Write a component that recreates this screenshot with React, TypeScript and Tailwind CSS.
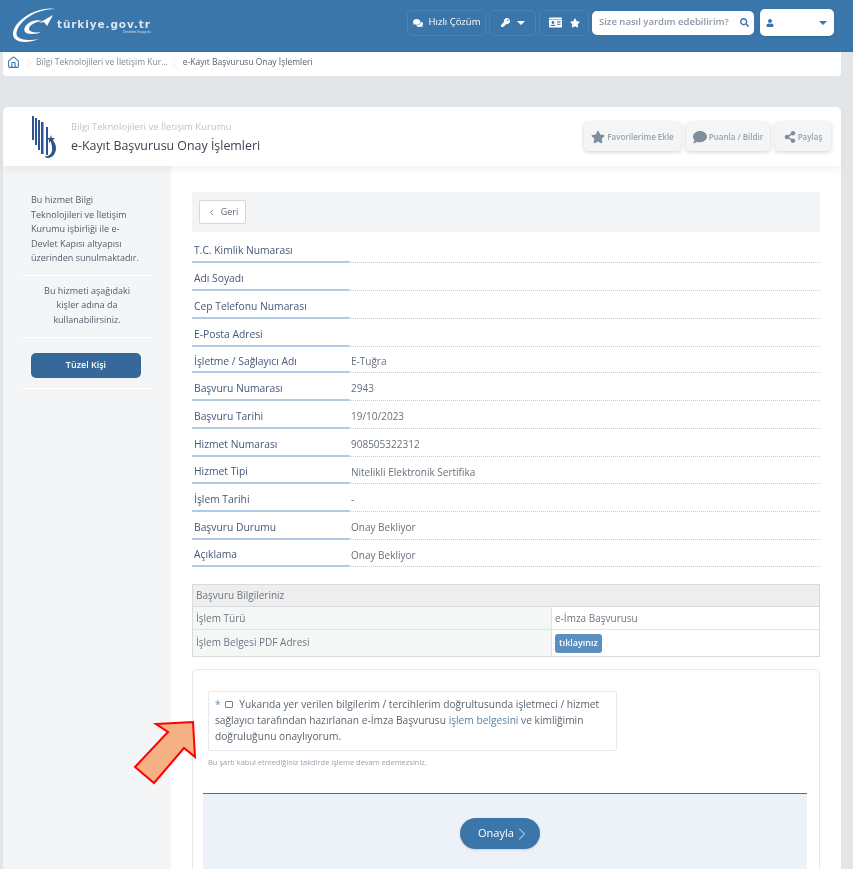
import React from 'react';
import { Home, ChevronLeft, ChevronRight } from 'lucide-react';
import { FaStar, FaComment, FaComments, FaShareAlt, FaKey, FaUser, FaSearch, FaIdCard } from 'react-icons/fa';

const font = { fontFamily: '"Open Sans", "Noto Sans", sans-serif' };

const rows: { label: string; value?: string; h: string }[] = [
  { label: 'T.C. Kimlik Numarası', h: 'h-[28px]' },
  { label: 'Adı Soyadı', h: 'h-[28px]' },
  { label: 'Cep Telefonu Numarası', h: 'h-[28px]' },
  { label: 'E-Posta Adresi', h: 'h-[28px]' },
  { label: 'İşletme / Sağlayıcı Adı', value: 'E-Tuğra', h: 'h-[26px]' },
  { label: 'Başvuru Numarası', value: '2943', h: 'h-[28px]' },
  { label: 'Başvuru Tarihi', value: '19/10/2023', h: 'h-[28px]' },
  { label: 'Hizmet Numarası', value: '908505322312', h: 'h-[28px]' },
  { label: 'Hizmet Tipi', value: 'Nitelikli Elektronik Sertifika', h: 'h-[27px]' },
  { label: 'İşlem Tarihi', value: '-', h: 'h-[28px]' },
  { label: 'Başvuru Durumu', value: 'Onay Bekliyor', h: 'h-[28px]' },
  { label: 'Açıklama', value: 'Onay Bekliyor', h: 'h-[27px]' },
];

const Logo = () => (
  <svg width="44" height="36" viewBox="0 0 44 36" className="shrink-0">
    <path d="M43 1C36 -1 20 2 9 12C1 19 -1 27 3 31C7 35 17 35 27 31C18 33 8 32 5 28C3 24 7 16 15 10C23 4 34 1 43 1Z" fill="#fff" />
    <path d="M30 13C24 11 16 14 13 19C11 23 13 26 20 26C24 26 27 25 29 24C23 25 17 24 17 21C17 17 23 14 30 13Z" fill="#fff" />
    <path d="M27 15L41 7L35 18L32 14Z" fill="#fff" />
  </svg>
);

const AgencyLogo = () => (
  <svg width="26" height="44" viewBox="0 0 26 44" className="shrink-0">
    <g fill="#2d5490">
      <rect x="1" y="1" width="2" height="24" />
      <rect x="4" y="3" width="2" height="27" />
      <rect x="7" y="5" width="2" height="30" />
      <rect x="10" y="7" width="2.5" height="32" />
      <rect x="15" y="12" width="2" height="28" />
      <path d="M19 24C22 25 25 28 25 33C25 39 21 43 17 43C15 43 14 42 14 41C18 42 22 38 21 33C21 30 20 27 19 24Z" />
      <path d="M20 20L21 23L24 23L22 25L23 28L20 26L18 28L18 25L16 23L19 23Z" />
    </g>
  </svg>
);

const HeaderBtn = ({ children }: { children: React.ReactNode }) => (
  <div className="h-[26px] flex items-center justify-center rounded-[5px] border border-[#4a82b4] text-white">{children}</div>
);

const Caret = ({ color = 'border-t-white' }: { color?: string }) => (
  <span className={`w-0 h-0 border-x-[4px] border-x-transparent border-t-[4px] ${color}`} />
);

const ActionBtn = ({ icon, label, w }: { icon: React.ReactNode; label: string; w: string }) => (
  <div className={`${w} h-[29px] flex items-center justify-center gap-[2px] rounded-[4px] bg-[#f4f5f6] shadow-[0_1px_4px_rgba(0,0,0,0.18)] text-[8px] font-semibold text-[#98a3ae]`}>
    {icon}
    <span>{label}</span>
  </div>
);

export default function App() {
  return (
    <div style={font} className="relative h-[869px] w-[853px] overflow-hidden bg-[#e3e6e9] text-[#4b5563] blur-[0.4px]">
      {/* Header */}
      <header className="h-[52px] bg-[#3b76ab] flex items-center pl-[12px] pr-[19px] border-b border-[#3a6f9f]">
        <Logo />
        <div className="ml-[1px] flex flex-col items-end">
          <span className="font-['DejaVu_Sans'] font-bold text-[10.5px] leading-[12px] tracking-[0.9px] text-[#d9e5f0]">türkiye.gov.tr</span>
          <span className="text-[3.5px] leading-[4px] text-[#d9e5f0]">Devletin Kısayolu</span>
        </div>
        <div className="ml-auto flex items-center gap-[3px] pb-[6px]">
          <div className="w-[79px]">
            <HeaderBtn>
              <FaComments size={10} className="mr-[6px]" />
              <span className="text-[9.5px] font-medium">Hızlı Çözüm</span>
            </HeaderBtn>
          </div>
          <div className="w-[47px]">
            <HeaderBtn>
              <FaKey size={9} className="mr-[7px]" />
              <Caret />
            </HeaderBtn>
          </div>
          <div className="w-[50px]">
            <HeaderBtn>
              <FaIdCard size={13} className="mr-[8px]" />
              <FaStar size={10} />
            </HeaderBtn>
          </div>
          <div className="w-[162px] h-[24px] bg-white rounded-[5px] flex items-center justify-between pl-[7px] pr-[5px]">
            <span className="text-[9.5px] text-[#8c97a3] font-semibold">Size nasıl yardım edebilirim?</span>
            <FaSearch size={9} className="text-[#3b76ab]" />
          </div>
          <div className="ml-[3px] w-[74px] h-[27px] bg-white rounded-[5px] flex items-center justify-between pl-[6px] pr-[7px] shadow-sm">
            <FaUser size={8} className="text-[#3b76ab]" />
            <Caret color="border-t-[#3b76ab]" />
          </div>
        </div>
      </header>

      {/* Breadcrumb */}
      <nav className="ml-[3px] w-[838px] h-[24px] bg-white rounded-b-[4px] flex items-center pl-[4px] pb-[3px] text-[8.5px] text-[#7e8a96] font-medium">
        <Home size={13} className="text-[#3b76ab]" />
        <ChevronRight size={14} strokeWidth={0.7} className="ml-[2px] text-[#c8ced4]" />
        <span>Bilgi Teknolojileri ve İletişim Kur...</span>
        <ChevronRight size={14} strokeWidth={0.7} className="mr-[1px] text-[#c8ced4]" />
        <span className="text-[#56616d]">e-Kayıt Başvurusu Onay İşlemleri</span>
      </nav>

      {/* Page card */}
      <div className="ml-[3px] mt-[31px] w-[838px] rounded-t-[5px] bg-white">
        <div className="h-[59px] flex items-center shadow-[0_4px_8px_rgba(0,0,0,0.05)] relative pl-[28px] pr-[10px]">
          <AgencyLogo />
          <div className="ml-[14px]">
            <div className="text-[9.5px] leading-[14px] text-[#bcc4d0]">Bilgi Teknolojileri ve İletişim Kurumu</div>
            <div className="mt-[3px] text-[12.4px] leading-[17px] text-[#3b4450]">e-Kayıt Başvurusu Onay İşlemleri</div>
          </div>
          <div className="ml-auto flex gap-[5px]">
            <ActionBtn w="w-[97px]" label="Favorilerime Ekle" icon={<FaStar size={14} className="text-[#7f8e9c]" />} />
            <ActionBtn w="w-[84px]" label="Puanla / Bildir" icon={<FaComment size={14} className="text-[#7f8e9c]" />} />
            <ActionBtn w="w-[56px]" label="Paylaş" icon={<FaShareAlt size={12} className="text-[#7f8e9c]" />} />
          </div>
        </div>

        <div className="flex">
          {/* Sidebar */}
          <aside className="w-[168px] h-[703px] shrink-0 bg-[#f3f5f7] px-[18px] text-[9px] leading-[14.5px] text-[#525c68]">
            <p className="pl-[10px] pt-[27px] pb-[9px]">
              Bu hizmet Bilgi<br />Teknolojileri ve İletişim<br />Kurumu işbirliği ile e-<br />Devlet Kapısı altyapısı<br />üzerinden sunulmaktadır.
            </p>
            <div className="border-t border-white" />
            <p className="pt-[8px] pb-[10px] text-center">Bu hizmeti aşağıdaki<br />kişler adına da<br />kullanabilirsiniz.</p>
            <div className="border-t border-white" />
            <div className="ml-[10px] mr-[12px] mt-[15px] h-[25px] rounded-[5px] bg-[#36699a] text-white text-[9px] font-semibold flex items-center justify-center">Tüzel Kişi</div>
            <div className="mt-[10px] border-t border-white" />
          </aside>

          {/* Main content */}
          <main className="flex-1 pl-[21px] pr-[21px] pt-[26px]">
            <div className="h-[40px] rounded-[3px] bg-[#f3f4f6] flex items-center pl-[7px]">
              <div className="w-[47px] h-[24px] bg-white border border-[#d5d9dd] rounded-[2px] flex items-center justify-center gap-[5px] text-[9px] text-[#5d6874]">
                <ChevronLeft size={9} />
                <span>Geri</span>
              </div>
            </div>

            <div className="mt-[3px]">
              {rows.map((r) => (
                <div key={r.label} className={`${r.h} flex items-center pt-[4px] border-b border-dotted border-[#b8cfe5] relative text-[10.3px]`}>
                  <div className="w-[158px] pl-[2px] text-[#44587a] font-medium">{r.label}</div>
                  <div className="pl-[1px] text-[#66707c] text-[10px]">{r.value}</div>
                  <div className="absolute left-0 -bottom-[1px] w-[158px] border-b-2 border-[#b0cbe3]" />
                </div>
              ))}
            </div>

            {/* Application info table */}
            <div className="mt-[17px] border border-[#d8dadc] text-[10px] text-[#6c7681]">
              <div className="h-[22px] bg-[#eeeeee] flex items-center pl-[3px] border-b border-[#d8dadc]">Başvuru Bilgileriniz</div>
              <div className="h-[23px] flex border-b border-[#e0e2e4]">
                <div className="w-[359px] bg-[#f5f7f7] flex items-center pl-[3px] border-r border-[#e0e2e4]">İşlem Türü</div>
                <div className="flex items-center pl-[3px]">e-İmza Başvurusu</div>
              </div>
              <div className="h-[26px] flex">
                <div className="w-[359px] bg-[#f5f7f7] flex items-center pl-[3px] pb-[1px] border-r border-[#e0e2e4]">İşlem Belgesi PDF Adresi</div>
                <div className="flex items-center pl-[3px]">
                  <span className="h-[19px] w-[47px] rounded-[3px] bg-[#5b8fc0] text-white text-[9px] font-semibold flex items-center justify-center">tıklayınız</span>
                </div>
              </div>
            </div>

            {/* Confirmation */}
            <div className="mt-[12px] border border-[#e6e8ea] rounded-[5px] h-[260px] pl-[10px] pr-[12px] pt-[21px]">
              <div className="mx-[5px] w-[409px] h-[60px] border border-[#e6e8ea] rounded-[2px] px-[6px] pt-[4px] text-[10.2px] leading-[16px] text-[#5a6571]">
                <span className="text-[#5b8fc0]">*</span>
                <input type="checkbox" readOnly className="mx-[4px] w-[8px] h-[7px] appearance-none border border-[#77818c] rounded-[1px] align-baseline" />
                {' '}Yukarıda yer verilen bilgilerim / tercihlerim doğrultusunda işletmeci / hizmet<br />sağlayıcı tarafından hazırlanan e-İmza Başvurusu <span className="text-[#5b7fa8]">işlem belgesini</span> ve kimliğimin<br />doğruluğunu onaylıyorum.
              </div>
              <div className="mx-[5px] mt-[5px] text-[7.5px] leading-[12px] text-[#9aa3ad]">Bu şartı kabul etmediğiniz takdirde işleme devam edemezsiniz.</div>
              <div className="mt-[25px] h-[120px] border-t border-[#3b76ab] bg-[#edf1f8] flex justify-center pt-[24px] pr-[10px]">
                <div className="w-[80px] h-[31px] rounded-full bg-[#3b76ab] text-white text-[11px] font-medium flex items-center pl-[18px] shadow-sm">
                  <span>Onayla</span>
                  <ChevronRight size={20} strokeWidth={1} className="-ml-[2px]" />
                </div>
              </div>
            </div>
          </main>
        </div>
      </div>

      {/* Annotation arrow over the page */}
      <svg className="absolute left-[133px] top-[718px]" width="66" height="70" viewBox="0 0 66 70">
        <path d="M23 6L60 4L62 39L51 30L21 65L2 49L35 14Z" fill="#f5b183" stroke="#ff0000" strokeWidth="2" strokeLinejoin="miter" />
      </svg>
    </div>
  );
}
